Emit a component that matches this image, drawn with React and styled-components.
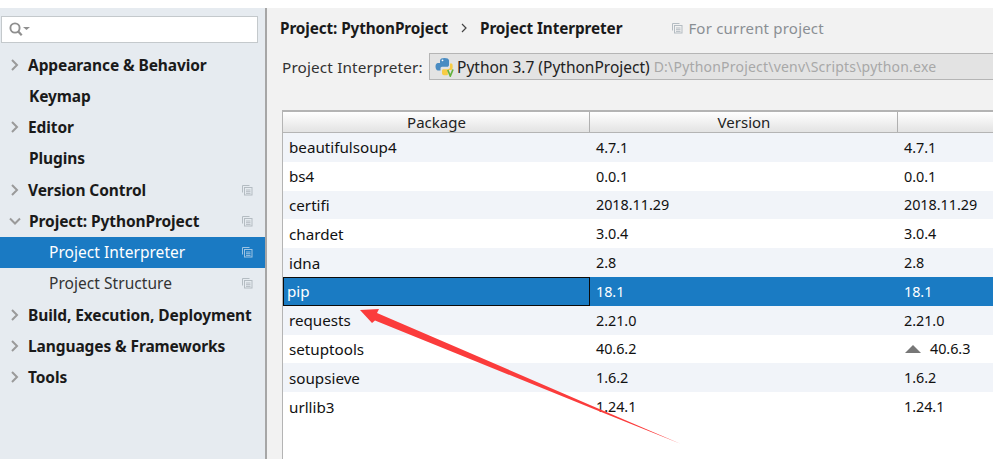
import React from "react";
import styled, { createGlobalStyle } from "styled-components";

const GlobalStyle = createGlobalStyle`
	html, body {
		margin: 0;
		padding: 0;
		background: #ffffff;
	}
	body {
		font-family: "Noto Sans", "Open Sans", "Liberation Sans", sans-serif;
		color: #111111;
	}
`;

const Page = styled.div`
	position: relative;
	width: 993px;
	height: 459px;
	padding-top: 8px;
	box-sizing: border-box;
	display: flex;
	overflow: hidden;
`;

const Sidebar = styled.aside`
	width: 265px;
	flex: none;
	background: #e6ebf0;
	border-right: 2px solid #a6a6a6;
	padding-top: 8px;
`;

const SearchBox = styled.div`
	width: 257px;
	height: 27px;
	margin-left: 1px;
	box-sizing: border-box;
	background: #ffffff;
	border: 1px solid #c4c9cc;
	display: flex;
	align-items: center;
	padding-left: 7px;
`;

const Tree = styled.div`
	margin-top: 6px;
`;

const TreeRow = styled.div`
	height: 31.25px;
	display: flex;
	align-items: center;
	position: relative;
	box-sizing: border-box;
	padding-left: ${(p) => (p.$child ? 49 : p.$shift ? 29 : 28)}px;
	font-size: 15.5px;
	font-weight: ${(p) => (p.$child ? 400 : 700)};
	letter-spacing: ${(p) => (p.$child ? "0.05px" : "-0.1px")};
	background: ${(p) => (p.$active ? "#1a7ac3" : "transparent")};
	color: ${(p) => (p.$active ? "#ffffff" : p.$child ? "#333333" : "#1a1a1a")};
`;

const Chevron = styled.svg`
	position: absolute;
	left: 9px;
	top: 50%;
	margin-top: -6px;
	width: 12px;
	height: 12px;
	fill: none;
	stroke: #9a9a9a;
	stroke-width: 2;
`;

const ProjectMark = styled.svg`
	position: ${(p) => (p.$inline ? "static" : "absolute")};
	right: 12px;
	top: 50%;
	margin-top: ${(p) => (p.$inline ? 0 : -6)}px;
	margin-right: ${(p) => (p.$inline ? 5 : 0)}px;
	width: 12px;
	height: 12px;
	flex: none;
	fill: none;
	stroke: ${(p) => (p.$active ? "#9dc3e2" : "#b4bcc2")};
	stroke-width: 1;
`;

const Content = styled.main`
	flex: 1;
	background: #f2f2f2;
	padding: 8px 0 0 13px;
	min-width: 0;
`;

const Crumbs = styled.div`
	height: 24px;
	display: flex;
	align-items: center;
	font-size: 15.3px;
	font-weight: 700;
	letter-spacing: -0.1px;
	color: #1a1a1a;
`;

const CrumbSep = styled.svg`
	width: 8px;
	height: 10px;
	margin: 0 12px;
	fill: none;
	stroke: #444444;
	stroke-width: 1.2;
`;

const CurrentProject = styled.div`
	display: flex;
	align-items: center;
	margin-left: 49px;
	font-size: 15px;
	font-weight: 400;
	letter-spacing: 0.2px;
	color: #8a8f94;
`;

const InterpreterRow = styled.div`
	height: 27px;
	margin-top: 13px;
	display: flex;
	align-items: center;
	padding-left: 2px;
	font-size: 15.3px;
	color: #333333;
`;

const InterpreterLabel = styled.span`
	width: 147px;
	flex: none;
	letter-spacing: 0.15px;
`;

const InterpreterBox = styled.div`
	flex: 1;
	height: 27px;
	box-sizing: border-box;
	background: #e3e3e3;
	border: 1px solid #b5b5b5;
	border-right: none;
	display: flex;
	align-items: center;
	padding-left: 5px;
	white-space: nowrap;
	font-size: 15.5px;
	color: #222222;
`;

const InterpreterPath = styled.span`
	margin-left: 4px;
	font-size: 14px;
	letter-spacing: 0.2px;
	color: #a8a8a8;
`;

const PackageTable = styled.div`
	margin: 30px 0 0 2px;
	border-top: 2px solid #b4b4b4;
	border-left: 1px solid #b4b4b4;
	background: #ffffff;
	height: 360px;
`;

const Columns = styled.div`
	display: grid;
	grid-template-columns: 307px 308px 1fr;
`;

const HeaderRow = styled(Columns)`
	height: 21px;
	box-sizing: border-box;
	background: linear-gradient(#ffffff, #e3e3e3);
	border-bottom: 1px solid #b4b4b4;
	font-size: 15px;
	color: #222222;
`;

const HeaderCell = styled.div`
	display: flex;
	align-items: center;
	justify-content: center;
	position: relative;
	${(p) => p.$divided && "box-shadow: inset -1px 0 0 #b0b0b0;"}
`;

const Row = styled(Columns)`
	height: 28.8px;
	font-size: 14.4px;
	letter-spacing: -0.05px;
	background: ${(p) => (p.$selected ? "#1a7bc3" : p.$odd ? "#f1f4f9" : "#ffffff")};
	color: ${(p) => (p.$selected ? "#ffffff" : "#111111")};
`;

const Cell = styled.div`
	display: flex;
	align-items: center;
	box-sizing: border-box;
	padding-left: 6px;
	${(p) => p.$name && "font-size: 15.2px; letter-spacing: 0;"}
	${(p) => p.$focused && "border: 1px solid #0b0b0b; padding-left: 3px;"}
`;

const UpgradeMark = styled.span`
	width: 0;
	height: 0;
	margin: 0 9px 0 1px;
	border-left: 8px solid transparent;
	border-right: 8px solid transparent;
	border-bottom: 8px solid #777777;
`;

const Arrow = styled.svg`
	position: absolute;
	left: 0;
	top: 0;
	width: 993px;
	height: 459px;
	pointer-events: none;
`;

const tree = [
	{ label: "Appearance & Behavior", arrow: "right" },
	{ label: "Keymap", shift: true },
	{ label: "Editor", arrow: "right" },
	{ label: "Plugins", shift: true },
	{ label: "Version Control", arrow: "right", mark: true },
	{ label: "Project: PythonProject", arrow: "down", mark: true, shift: true },
	{ label: "Project Interpreter", child: true, active: true, mark: true },
	{ label: "Project Structure", child: true, mark: true },
	{ label: "Build, Execution, Deployment", arrow: "right" },
	{ label: "Languages & Frameworks", arrow: "right" },
	{ label: "Tools", arrow: "right" },
];

const packages = [
	["beautifulsoup4", "4.7.1", "4.7.1"],
	["bs4", "0.0.1", "0.0.1"],
	["certifi", "2018.11.29", "2018.11.29"],
	["chardet", "3.0.4", "3.0.4"],
	["idna", "2.8", "2.8"],
	["pip", "18.1", "18.1"],
	["requests", "2.21.0", "2.21.0"],
	["setuptools", "40.6.2", "40.6.3", true],
	["soupsieve", "1.6.2", "1.6.2"],
	["urllib3", "1.24.1", "1.24.1"],
];

const CopyIcon = (props) => (
	<ProjectMark viewBox="0 0 12 12" {...props}>
		<path d="M8.5 1.5h-7v7" />
		<rect x="3.5" y="3.5" width="7.5" height="7.5" />
		<path d="M5 6h4.5M5 7.7h4.5M5 9.4h4.5" />
	</ProjectMark>
);

const SearchIcon = () => (
	<svg width="23" height="15" viewBox="0 0 23 15" fill="none">
		<circle cx="6" cy="6" r="4.6" stroke="#8f8f8f" strokeWidth="1.9" />
		<path d="M9.300 9.500l3.400 3.800" stroke="#8f8f8f" strokeWidth="2.200" />
		<path d="M14 5h7l-3.500 3z" fill="#8f8f8f" />
	</svg>
);

const PythonIcon = () => (
	<svg width="20" height="20" viewBox="0 0 20 20" style={{ marginRight: 2, flex: "none" }}>
		<path d="M5 7V3.500C5 1.800 7 1 9.500 1s4.500.8 4.500 2.500V8c0 1-.8 1.800-1.800 1.800H7C6 9.800 5.500 10.500 5.500 11.500v2H3C1.500 13.500.5 11.800.5 9.500S1.500 6 3 6h6.500v1z" fill="#4a8cc2" />
		<path d="M15 6.500V10c0 1.500-1 2.200-2.300 2.200H8.500c-1 0-1.500.7-1.500 1.600v2.700c0 1.300 1.500 1.800 3.500 1.800.8 0 1.600 0 2.300-.2v-5.100h3.400c.9 0 1.500-1.500 1.500-3.200S17.500 6.500 16.500 6.500z" fill="#f7cc45" />
		<circle cx="7.500" cy="3.300" r=".9" fill="#ffffff" />
		<path d="M12.800 13l2.500 6 2.700-6.500" fill="none" stroke="#63b23c" strokeWidth="1.700" />
	</svg>
);

const App = () => {
	return (
		<>
			<GlobalStyle />
			<Page>
				<Sidebar>
					<SearchBox>
						<SearchIcon />
					</SearchBox>
					<Tree>
						{tree.map((item) => (
							<TreeRow key={item.label} $child={item.child} $active={item.active} $shift={item.shift}>
								{item.arrow && (
									<Chevron viewBox="0 0 12 12">
										<path d={item.arrow === "down" ? "M1 3.500l5 5 5-5" : "M3 1l5 5-5 5"} />
									</Chevron>
								)}
								{item.label}
								{item.mark && <CopyIcon $active={item.active} />}
							</TreeRow>
						))}
					</Tree>
				</Sidebar>
				<Content>
					<Crumbs>
						Project: PythonProject
						<CrumbSep viewBox="0 0 8 10">
							<path d="M2 1l4 4-4 4" />
						</CrumbSep>
						Project Interpreter
						<CurrentProject>
							<CopyIcon $inline />
							For current project
						</CurrentProject>
					</Crumbs>
					<InterpreterRow>
						<InterpreterLabel>Project Interpreter:</InterpreterLabel>
						<InterpreterBox>
							<PythonIcon />
							Python 3.7 (PythonProject)
							<InterpreterPath>D:\PythonProject\venv\Scripts\python.exe</InterpreterPath>
						</InterpreterBox>
					</InterpreterRow>
					<PackageTable>
						<HeaderRow>
							<HeaderCell $divided>Package</HeaderCell>
							<HeaderCell $divided>Version</HeaderCell>
							<HeaderCell />
						</HeaderRow>
						{packages.map(([name, version, latest, upgrade], i) => (
							<Row key={name} $odd={i % 2 === 0} $selected={name === "pip"}>
								<Cell $name $focused={name === "pip"}>{name}</Cell>
								<Cell>{version}</Cell>
								<Cell>
									{upgrade && <UpgradeMark />}
									{latest}
								</Cell>
							</Row>
						))}
					</PackageTable>
				</Content>
				<Arrow viewBox="0 0 993 459">
					<path d="M360 310L379 309L377 313L470 353L590 405L681 444L590 407.500L470 359L375 320.600L372 323z" fill="#fb3c3c" />
				</Arrow>
			</Page>
		</>
	);
};

export default App;
